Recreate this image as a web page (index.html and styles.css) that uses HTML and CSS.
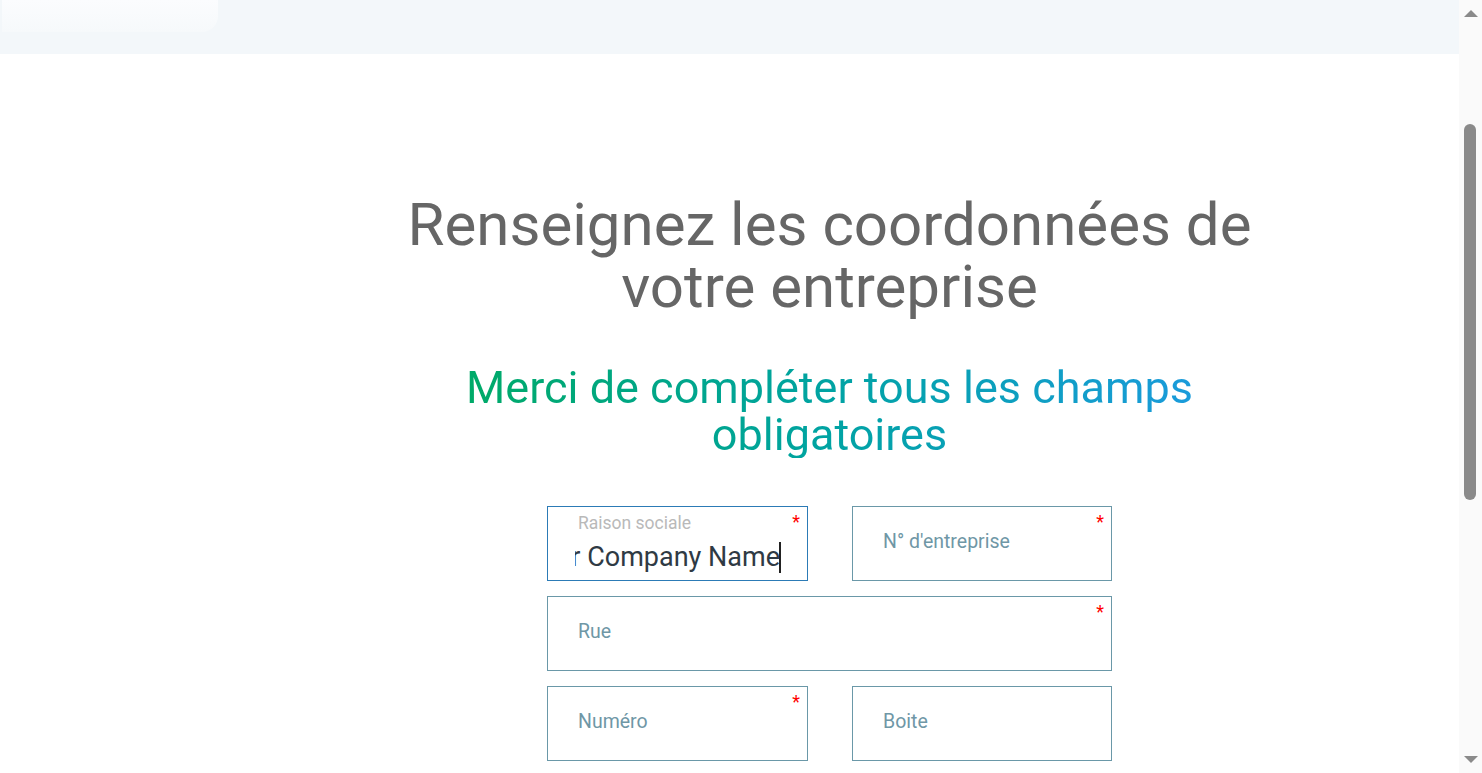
FILE: index.html
```html
<!DOCTYPE html>
<html lang="fr">
<head>
<meta charset="utf-8">
<title>Coordonnées de votre entreprise</title>
<link rel="stylesheet" href="styles.css">
</head>
<body>
<div class="viewport">
  <div class="page">
    <header class="topbar">
      <div class="topbar-card"></div>
    </header>
    <div class="layout">
      <aside class="side"></aside>
      <main class="main">
        <h1 class="title">Renseignez les coordonnées de<br>votre entreprise</h1>
        <h2 class="subtitle"><span>Merci de compléter tous les champs<br>obligatoires</span></h2>
        <form class="form">
          <div class="row">
            <div class="field first focused">
              <span class="float-label">Raison sociale</span>
              <div class="input-clip"><span class="value">Your Company Name</span><span class="caret"></span></div>
              <span class="req">*</span>
            </div>
            <div class="field">
              <span class="placeholder">N° d'entreprise</span>
              <span class="req">*</span>
            </div>
          </div>
          <div class="row">
            <div class="field wide">
              <span class="placeholder">Rue</span>
              <span class="req">*</span>
            </div>
          </div>
          <div class="row">
            <div class="field first">
              <span class="placeholder">Numéro</span>
              <span class="req">*</span>
            </div>
            <div class="field">
              <span class="placeholder">Boite</span>
            </div>
          </div>
        </form>
      </main>
    </div>
  </div>
  <div class="scrollbar">
    <span class="arrow up"></span>
    <div class="track"><div class="thumb"></div></div>
    <span class="arrow down"></span>
  </div>
</div>
</body>
</html>
```

FILE: styles.css
```css
* { box-sizing: border-box; }
html, body { margin: 0; padding: 0; height: 100%; overflow: hidden; }
body { font-family: Roboto, "Liberation Sans", sans-serif; background: #fff; }

.viewport { display: flex; height: 773px; }
.page { flex: 1; min-width: 0; overflow: hidden; }

.topbar { height: 54px; background: #f3f7fa; padding-left: 2px; }
.topbar-card {
  width: 216px; height: 32px;
  background: linear-gradient(#fbfcfe, #f6f9fb);
  border-bottom-right-radius: 16px;
}

.layout { display: flex; }
.side { width: 200px; flex: none; }
.main { flex: 1; display: flex; flex-direction: column; align-items: center; padding-top: 140px; }

.title {
  margin: 0;
  font-weight: 400;
  font-size: 60px;
  line-height: 62px;
  color: #666;
  text-align: center;
}

.subtitle {
  margin: 46px 0 0;
  font-weight: 400;
  font-size: 45px;
  line-height: 47px;
  text-align: center;
}
.subtitle span {
  display: inline-block;
  background: linear-gradient(90deg, #00aa68 0%, #00a3a3 50%, #1a9bdb 100%);
  -webkit-background-clip: text;
  background-clip: text;
  color: transparent;
}

.form { margin-top: 48px; display: flex; flex-direction: column; gap: 15px; width: 565px; }
.row { display: flex; gap: 44px; }

.field {
  position: relative;
  width: 260px; height: 75px;
  border: 1px solid #6a98a8;
  display: flex; align-items: center;
  padding-left: 30px; padding-bottom: 4px;
}
.field.first { width: 261px; }
.field.wide { width: 565px; }
.field.focused { border-color: #2c7bb6; display: block; padding: 0; }

.placeholder { font-size: 19.5px; color: #6f97a6; }

.req {
  position: absolute; top: 5px; right: 7px;
  color: #ff0000; font-size: 18px; line-height: 20px;
}

.float-label {
  position: absolute; left: 30px; top: 6px;
  font-size: 17.5px; color: #b9b9b9; line-height: 20px;
}
.input-clip {
  position: absolute; left: 27px; top: 34px;
  width: 206px; height: 32px;
  overflow: hidden;
  display: flex; justify-content: flex-end; align-items: center;
}
.value { white-space: nowrap; font-size: 27px; color: #2f3a44; flex: none; }
.caret { width: 2px; height: 31px; background: #222; flex: none; margin-left: -1px; }

.scrollbar {
  width: 23px; flex: none; background: #fafafa;
  display: flex; flex-direction: column; align-items: center;
  padding: 10px 0 10px;
}
.arrow { width: 0; height: 0; border-left: 7px solid transparent; border-right: 7px solid transparent; }
.arrow.up { border-bottom: 7px solid #8a8a8a; }
.arrow.down { border-top: 7px solid #8a8a8a; }
.track { flex: 1; width: 100%; padding: 107px 0 0 5px; }
.thumb { width: 12px; height: 376px; background: #8a8a8a; border-radius: 6px; }
```
